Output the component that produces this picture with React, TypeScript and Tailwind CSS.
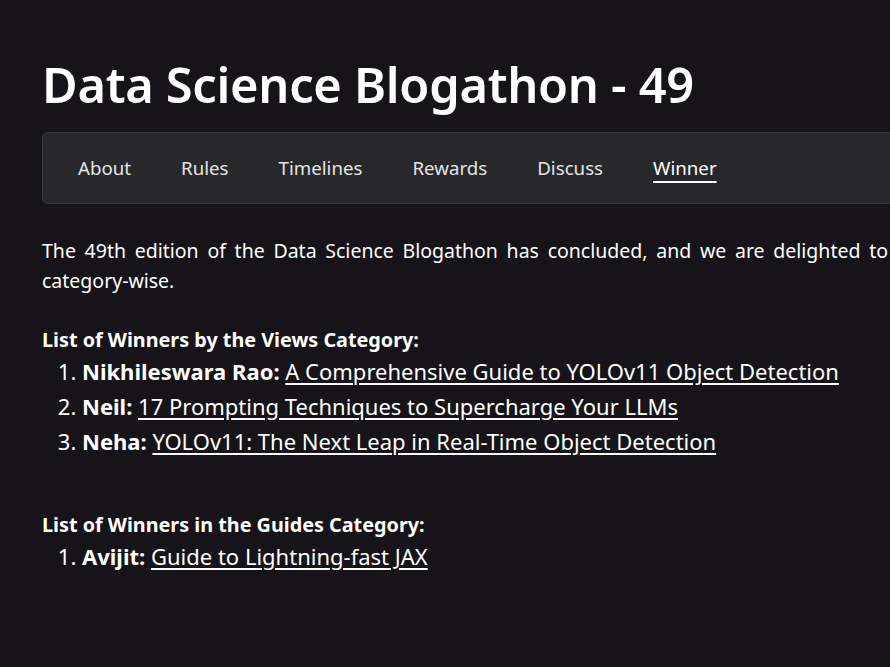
export default function App() {
  const tabs = ["About", "Rules", "Timelines", "Rewards", "Discuss", "Winner"];
  return (
    <div className="h-[667px] w-[890px] overflow-hidden bg-[#161418] text-white" style={{ fontFamily: '"Noto Sans", "Open Sans", sans-serif' }}>
      <div className="w-[846px] ml-[42px] pt-[52px]">
        <h1 className="text-[48.8px] font-semibold leading-[64px] tracking-[-0.3px]">Data Science Blogathon - 49</h1>
        <nav className="mt-[16px] h-[72px] w-[852px] rounded-[6px] border border-[#3a393d] bg-[#28272a] flex items-center pl-[35px] gap-[50px] text-[18.7px] text-[#e4e4e7]">
          {tabs.map((t) => (
            <span key={t} className={t === "Winner" ? "text-white underline underline-offset-[6px] decoration-[2px]" : ""}>{t}</span>
          ))}
        </nav>
        <p className="mt-[32px] text-[19.5px] leading-[30px] text-justify">
          <span className="block [text-align-last:justify]">The 49th edition of the Data Science Blogathon has concluded, and we are delighted to</span>
          <span className="block">category-wise.</span>
        </p>
        <p className="mt-[30px] text-[19.8px] font-bold leading-[28px]">List of Winners by the Views Category:</p>
        <ol className="list-decimal pl-[40px] text-[22px] leading-[35px]">
          <li><b>Nikhileswara Rao:</b> <a className="underline underline-offset-[3px]">A Comprehensive Guide to YOLOv11 Object Detection</a></li>
          <li><b>Neil:</b> <a className="underline underline-offset-[3px]">17 Prompting Techniques to Supercharge Your LLMs</a></li>
          <li><b>Neha:</b> <a className="underline underline-offset-[3px]">YOLOv11: The Next Leap in Real-Time Object Detection</a></li>
        </ol>
        <p className="mt-[52px] text-[19.8px] font-bold leading-[28px]">List of Winners in the Guides Category:</p>
        <ol className="list-decimal pl-[40px] text-[22px] leading-[35px]">
          <li><b>Avijit:</b> <a className="underline underline-offset-[3px]">Guide to Lightning-fast JAX</a></li>
        </ol>
      </div>
    </div>
  );
}
